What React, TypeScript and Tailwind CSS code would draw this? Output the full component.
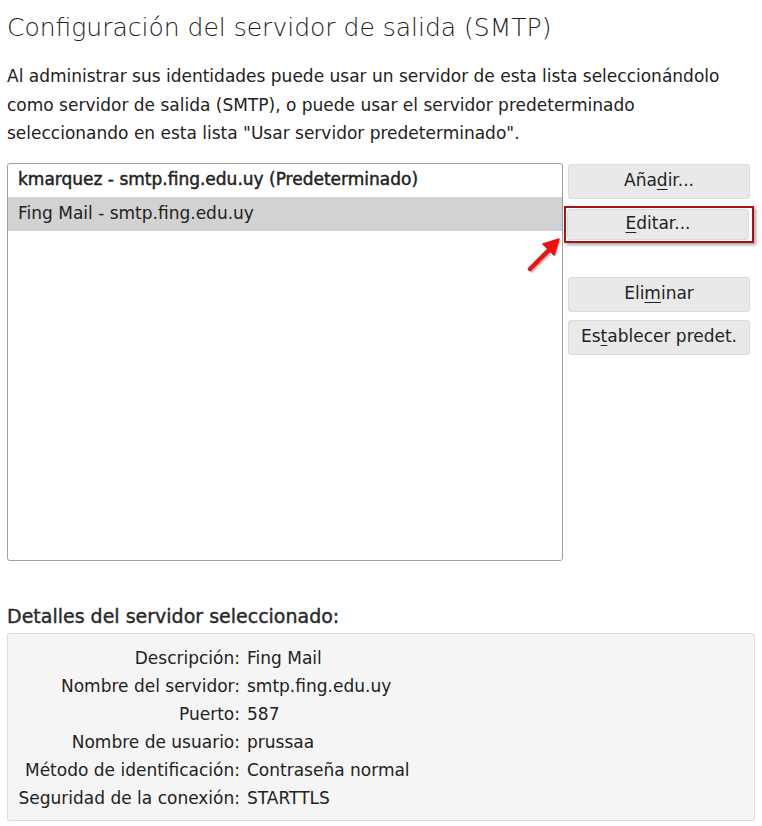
import React from 'react';

const servers = [
  { id: 'kmarquez', label: 'kmarquez - smtp.fing.edu.uy (Predeterminado)', isDefault: true },
  { id: 'fing', label: 'Fing Mail - smtp.fing.edu.uy', isDefault: false }
];

const details = [
  ['Descripción:', 'Fing Mail'],
  ['Nombre del servidor:', 'smtp.fing.edu.uy'],
  ['Puerto:', '587'],
  ['Nombre de usuario:', 'prussaa'],
  ['Método de identificación:', 'Contraseña normal'],
  ['Seguridad de la conexión:', 'STARTTLS']
];

const fontStack = "font-['DejaVu_Sans','Noto_Sans',sans-serif]";

const ActionButton = ({
  before,
  accel,
  after,
  className = 'h-[35px]'
}: {
  before: string;
  accel: string;
  after: string;
  className?: string;
}) => (
  <button
    type="button"
    className={`${className} flex w-[182px] items-center justify-center rounded-[3px] border border-[#dadada] bg-[#e9e9e9] text-[17px] text-[#222]`}
  >
    {before}
    <span className="underline underline-offset-[3px]">{accel}</span>
    {after}
  </button>
);

// annotation arrow pointing at the "Editar..." button
const RedArrow = () => (
  <svg className="absolute left-[511px] top-[68px]" width="48" height="46" viewBox="0 0 48 46">
    <g transform="translate(1.5 1.5)" opacity="0.35">
      <path d="M12 38 L33 17" stroke="#555" strokeWidth="4.5" strokeLinecap="round" />
      <path d="M41 8 L25 13 L36 24 Z" fill="#555" />
    </g>
    <path d="M12 38 L33 17" stroke="#ee1111" strokeWidth="4.5" strokeLinecap="round" />
    <path d="M41 8 L25 13 L36 24 Z" fill="#ee1111" stroke="#ee1111" strokeLinejoin="round" strokeWidth="1.5" />
  </svg>
);

export default function App() {
  return (
    <div className={`${fontStack} min-h-[826px] w-[762px] bg-white px-[7px] pt-[12px] text-[#222]`}>
      <h1 className="text-[25px] font-extralight leading-[32px]">Configuración del servidor de salida (SMTP)</h1>

      <p className="mt-[18px] text-[17px] leading-[28.5px]">
        Al administrar sus identidades puede usar un servidor de esta lista seleccionándolo
        <br />
        como servidor de salida (SMTP), o puede usar el servidor predeterminado
        <br />
        seleccionando en esta lista "Usar servidor predeterminado".
      </p>

      <div className="relative mt-[15px] flex gap-[5px]">
        <ul className="h-[398px] w-[556px] overflow-hidden rounded-[3px] border border-[#a0a0a0] bg-white">
          {servers.map(({ id, label, isDefault }) => (
            <li
              key={id}
              className={`${isDefault ? 'h-[33px] [-webkit-text-stroke:0.45px_#222]' : 'h-[34px] bg-[#d2d2d2]'} flex items-center px-[10px] text-[17px]`}
            >
              {label}
            </li>
          ))}
        </ul>

        <div className="flex flex-col">
          <div className="mt-px">
            <ActionButton before="Aña" accel="d" after="ir..." />
          </div>
          <div className="mt-[7px] -ml-[4px] w-[190px] border-2 border-[#a31515] p-px shadow-[2px_2px_3px_rgba(0,0,0,0.35)]">
            <ActionButton before="" accel="E" after="ditar..." className="h-[31px]" />
          </div>
          <div className="mt-[34px]">
            <ActionButton before="Eli" accel="m" after="inar" />
          </div>
          <div className="mt-[8px]">
            <ActionButton before="Es" accel="t" after="ablecer predet." />
          </div>
        </div>

        <RedArrow />
      </div>

      <h2 className="mt-[43px] text-[19px] leading-[24px] text-[#2a2a2a] [-webkit-text-stroke:0.4px_#2a2a2a]">
        Detalles del servidor seleccionado:
      </h2>

      <div className="mt-[5px] w-[748px] rounded-[3px] border border-[#dcdcdc] bg-[#f5f5f5] pb-[8px] pt-[10px]">
        <dl className="grid grid-cols-[232px_1fr] gap-x-[7px] text-[17px] leading-[28px]">
          {details.map(([term, value]) => (
            <React.Fragment key={term}>
              <dt className="text-right">{term}</dt>
              <dd>{value}</dd>
            </React.Fragment>
          ))}
        </dl>
      </div>
    </div>
  );
}
